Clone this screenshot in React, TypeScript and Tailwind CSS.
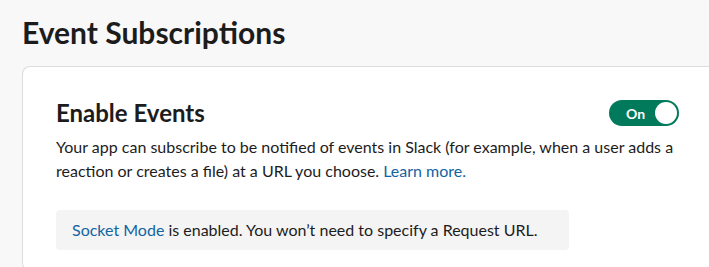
export default function App() {
  return (
    <div className="min-h-[267px] w-[709px] overflow-hidden bg-[#f8f8f8] font-['Lato','Liberation_Sans',sans-serif] text-[#1d1c1d]">
      <div className="pl-[22px] pt-[10px]">
        <h1 className="text-[30px] font-bold leading-[44px]">Event Subscriptions</h1>
        <div className="mt-[12px] rounded-l-lg border border-r-0 border-[#dddddd] bg-white pl-[33px] pr-[30px] pt-[28px] pb-[20px]">
          <div className="flex items-center justify-between">
            <h2 className="text-[24px] font-bold leading-[36px]">Enable Events</h2>
            <button className="flex h-[26px] w-[70px] items-center justify-between rounded-full bg-[#007a5a] pl-[17px] pr-[2px] text-[14px] font-bold text-white">
              On
              <span className="h-[22px] w-[22px] rounded-full bg-white" />
            </button>
          </div>
          <p className="mt-[4px] w-[640px] text-[16px] leading-[24px]">
            Your app can subscribe to be notified of events in Slack (for example, when a user adds a reaction or creates a file) at a URL you choose.{" "}
            <a className="text-[#1264a3]">Learn more.</a>
          </p>
          <div className="mt-[27px] w-[513px] rounded bg-[#f4f4f4] px-[16px] py-[8px] text-[16px] leading-[24px]">
            <a className="text-[#1264a3]">Socket Mode</a> is enabled. You won’t need to specify a Request URL.
          </div>
        </div>
      </div>
    </div>
  );
}
